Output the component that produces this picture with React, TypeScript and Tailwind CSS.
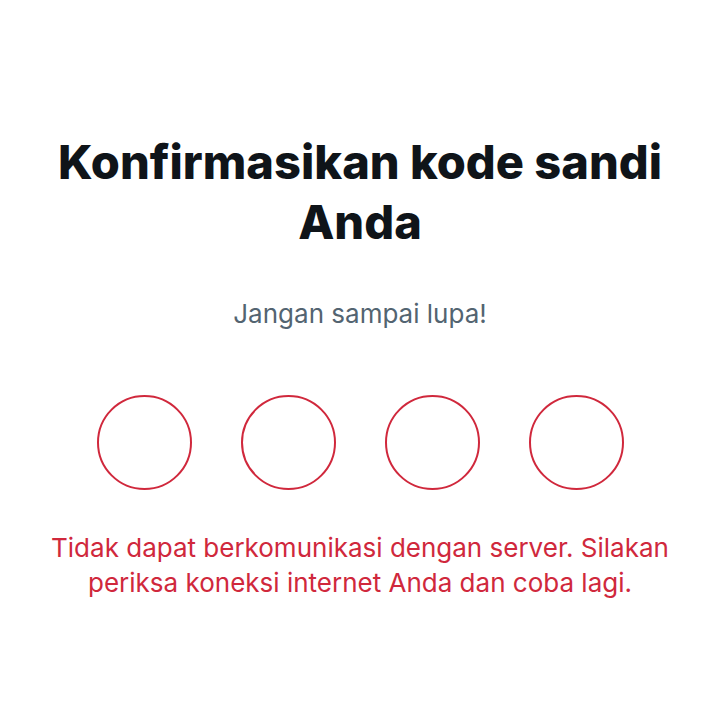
export default function App() {
  return (
    <div className="w-[720px] h-[720px] bg-white flex flex-col items-center" style={{ fontFamily: 'Inter, "Noto Sans", sans-serif' }}>
      <h1 className="mt-[132px] text-[47px] leading-[60px] font-extrabold text-[#0f1419] text-center px-8">
        Konfirmasikan kode sandi Anda
      </h1>
      <p className="mt-[46px] text-[26px] leading-[32px] text-[#536471]">Jangan sampai lupa!</p>
      <div className="mt-[65px] flex gap-[49px]">
        {[0, 1, 2, 3].map((i) => (
          <div key={i} className="w-[95px] h-[95px] rounded-full border-2 border-[#d0283c]" />
        ))}
      </div>
      <p className="mt-[40px] text-[26px] leading-[35px] text-[#d0283c] text-center px-6">
        Tidak dapat berkomunikasi dengan server. Silakan periksa koneksi internet Anda dan coba lagi.
      </p>
    </div>
  );
}
